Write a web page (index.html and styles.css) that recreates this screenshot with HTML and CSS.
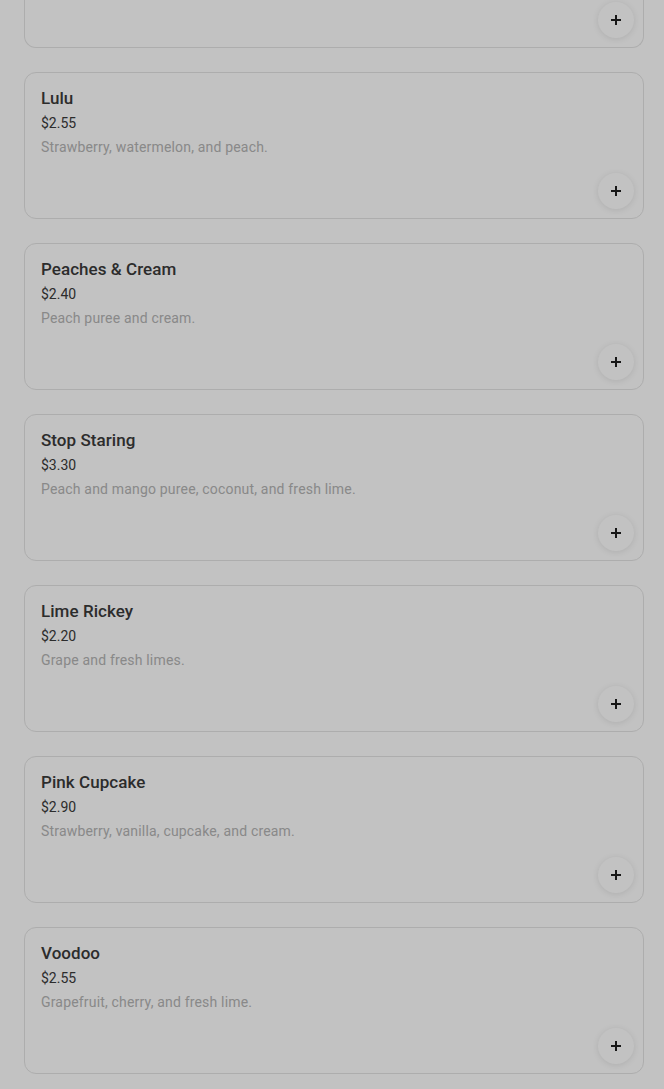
FILE: index.html
```html
<!DOCTYPE html>
<html lang="en">
<head>
<meta charset="utf-8">
<title>Menu</title>
<link rel="stylesheet" href="styles.css">
</head>
<body>
<main class="list">
  <article class="card card-partial">
    <button class="add" aria-label="Add"><svg viewBox="0 0 12 12" width="12" height="12"><path d="M6 1v10M1 6h10" stroke="#1f1f1f" stroke-width="2"/></svg></button>
  </article>
  <article class="card">
    <h3 class="name">Lulu</h3>
    <div class="price">$2.55</div>
    <p class="desc">Strawberry, watermelon, and peach.</p>
    <button class="add" aria-label="Add"><svg viewBox="0 0 12 12" width="12" height="12"><path d="M6 1v10M1 6h10" stroke="#1f1f1f" stroke-width="2"/></svg></button>
  </article>
  <article class="card">
    <h3 class="name">Peaches &amp; Cream</h3>
    <div class="price">$2.40</div>
    <p class="desc">Peach puree and cream.</p>
    <button class="add" aria-label="Add"><svg viewBox="0 0 12 12" width="12" height="12"><path d="M6 1v10M1 6h10" stroke="#1f1f1f" stroke-width="2"/></svg></button>
  </article>
  <article class="card">
    <h3 class="name">Stop Staring</h3>
    <div class="price">$3.30</div>
    <p class="desc">Peach and mango puree, coconut, and fresh lime.</p>
    <button class="add" aria-label="Add"><svg viewBox="0 0 12 12" width="12" height="12"><path d="M6 1v10M1 6h10" stroke="#1f1f1f" stroke-width="2"/></svg></button>
  </article>
  <article class="card">
    <h3 class="name">Lime Rickey</h3>
    <div class="price">$2.20</div>
    <p class="desc">Grape and fresh limes.</p>
    <button class="add" aria-label="Add"><svg viewBox="0 0 12 12" width="12" height="12"><path d="M6 1v10M1 6h10" stroke="#1f1f1f" stroke-width="2"/></svg></button>
  </article>
  <article class="card">
    <h3 class="name">Pink Cupcake</h3>
    <div class="price">$2.90</div>
    <p class="desc">Strawberry, vanilla, cupcake, and cream.</p>
    <button class="add" aria-label="Add"><svg viewBox="0 0 12 12" width="12" height="12"><path d="M6 1v10M1 6h10" stroke="#1f1f1f" stroke-width="2"/></svg></button>
  </article>
  <article class="card">
    <h3 class="name">Voodoo</h3>
    <div class="price">$2.55</div>
    <p class="desc">Grapefruit, cherry, and fresh lime.</p>
    <button class="add" aria-label="Add"><svg viewBox="0 0 12 12" width="12" height="12"><path d="M6 1v10M1 6h10" stroke="#1f1f1f" stroke-width="2"/></svg></button>
  </article>
</main>
<div class="backdrop"></div>
</body>
</html>
```
FILE: styles.css
```css
html, body {
  margin: 0;
  padding: 0;
  background: #ffffff;
  font-family: Roboto, "Liberation Sans", sans-serif;
  overflow: hidden;
}
.list {
  display: flex;
  flex-direction: column;
  gap: 24px;
  padding: 0 20px 16px 24px;
}
.card {
  display: flex;
  flex-direction: column;
  border: 1px solid #e4e4e4;
  border-radius: 12px;
  padding: 13px 16px 9px 16px;
  background: #ffffff;
}
.card-partial {
  border-top: none;
  border-top-left-radius: 0;
  border-top-right-radius: 0;
  padding-top: 0;
  height: 38px;
  justify-content: flex-end;
}
.name {
  margin: 0 0 1px;
  font-size: 17px;
  font-weight: 500;
  line-height: 24px;
  color: #3a3a3a;
  letter-spacing: 0.05px;
}
.price {
  font-size: 14px;
  line-height: 24px;
  color: #3a3a3a;
}
.desc {
  margin: 0;
  font-size: 14px;
  line-height: 24px;
  color: #b4b4b4;
  letter-spacing: 0.18px;
}
.add {
  align-self: flex-end;
  margin: 14px -7px 0 0;
  width: 36px;
  height: 36px;
  border-radius: 50%;
  border: none;
  background: #ffffff;
  box-shadow: 0 1px 6px rgba(0, 0, 0, 0.1);
  display: flex;
  align-items: center;
  justify-content: center;
  padding: 0;
  flex: none;
}
.card-partial .add {
  margin-top: 0;
}
.backdrop {
  position: fixed;
  inset: 0;
  background: rgba(0, 0, 0, 0.24);
}
```
